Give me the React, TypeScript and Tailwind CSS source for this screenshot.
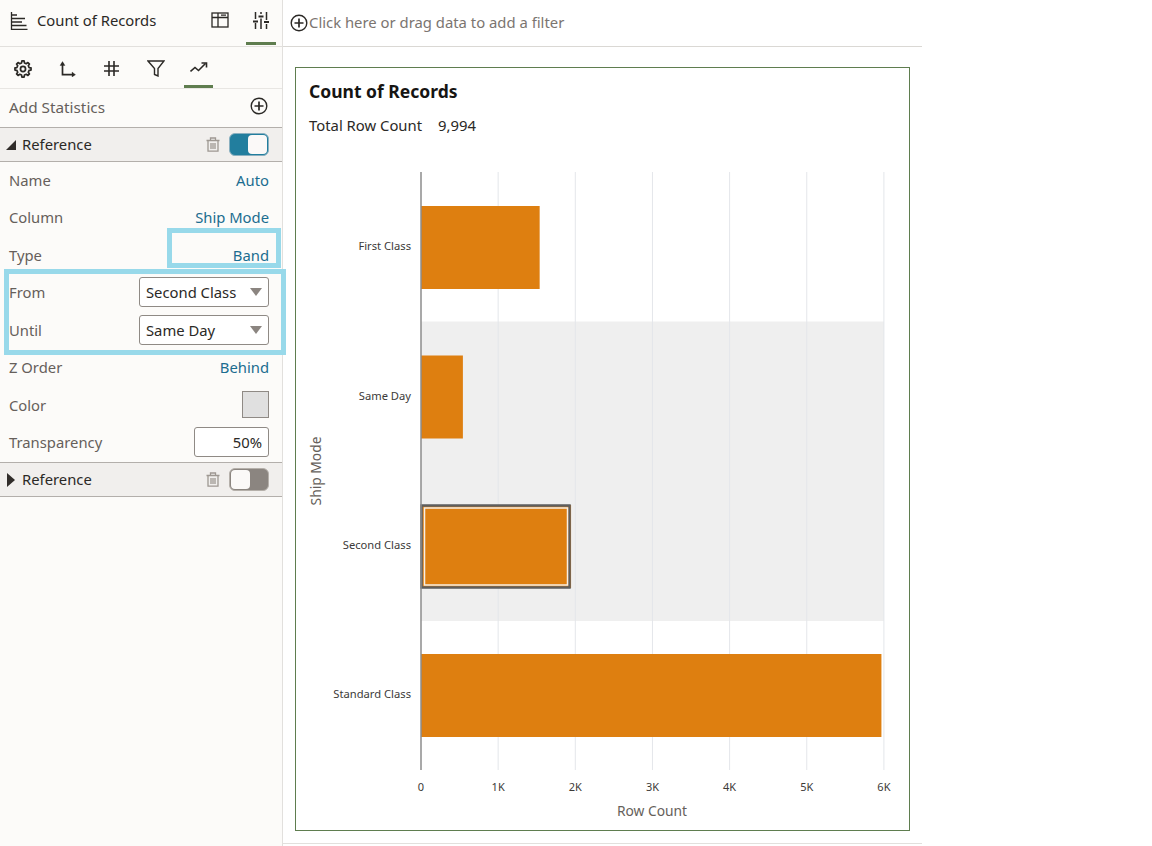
const F = { fontFamily: '"Noto Sans", "Open Sans", sans-serif' };

function ChartIcon() {
  return (
    <svg width="18" height="18" viewBox="0 0 18 18" fill="none" stroke="#2b2926" strokeWidth="1.300">
      <path d="M1.500 0v17.500H17.500M2 3h5M2 6.500h13M2 10h10M2 13.500h14.500" />
    </svg>
  );
}
function LayoutIcon() {
  return (
    <svg width="18" height="16" viewBox="0 0 18 16" fill="none" stroke="#2b2926" strokeWidth="1.300">
      <rect x="1" y="1" width="16" height="14" />
      <path d="M1 5.500h16M7 1v14M10 3.200h5" />
    </svg>
  );
}
function SlidersIcon() {
  return (
    <svg width="16" height="17" viewBox="0 0 16 17" fill="none" stroke="#2b2926" strokeWidth="1.500">
      <path d="M2.500 0v7M2.500 11v6M8 0v2M8 6.500v10.500M13.500 0v8M13.500 12v5" />
      <path d="M0 9.500h5M5.500 4.500h5M11 10h5" strokeWidth="2" />
    </svg>
  );
}
function GearIcon() {
  const n = 8;
  const pts: string[] = [];
  for (let i = 0; i < n; i++) {
    const a = (i * 2 * Math.PI) / n;
    const step = (2 * Math.PI) / n;
    const list: [number, number][] = [
      [8.3, a - step * 0.3],
      [10.8, a - step * 0.17],
      [10.8, a + step * 0.17],
      [8.3, a + step * 0.3],
    ];
    for (const [r, t] of list) {
      pts.push(`${(12 + r * Math.sin(t)).toFixed(2)},${(12 - r * Math.cos(t)).toFixed(2)}`);
    }
  }
  return (
    <svg width="18" height="18" viewBox="0 0 24 24" fill="none" stroke="#2b2926" strokeWidth="2.300" strokeLinejoin="round">
      <polygon points={pts.join(" ")} />
      <circle cx="12" cy="12" r="3.400" />
    </svg>
  );
}
function AxisIcon() {
  return (
    <svg width="18" height="16" viewBox="0 0 18 16" fill="none" stroke="#2b2926" strokeWidth="1.700">
      <path d="M4.500 2v11.700h10" />
      <path d="M2 4.500l2.500-4 2.500 4z" fill="#2b2926" strokeWidth="0.300" />
      <path d="M14 11l3.500 2.700-3.500 2.300z" fill="#2b2926" strokeWidth="0.300" />
    </svg>
  );
}
function HashIcon() {
  return (
    <svg width="15" height="15" viewBox="0 0 15 15" fill="none" stroke="#2b2926" strokeWidth="1.600">
      <path d="M5 0v15M10 0v15M0 5h15M0 10h15" />
    </svg>
  );
}
function FunnelIcon() {
  return (
    <svg width="18" height="17" viewBox="0 0 18 17" fill="none" stroke="#2b2926" strokeWidth="1.400">
      <path d="M1 1h16l-6 7.500V16l-3.500-1.500V8.500z" />
    </svg>
  );
}
function TrendIcon() {
  return (
    <svg width="18" height="11" viewBox="0 0 18 11" fill="none" stroke="#2b2926" strokeWidth="1.600">
      <path d="M0.500 9.500l4.500-4 3.500 3 7-7" />
      <path d="M11.500 1h5v4.500" />
    </svg>
  );
}
function PlusCircle({ size }: { size: number }) {
  return (
    <svg width={size} height={size} viewBox="0 0 18 18" fill="none" stroke="#2b2926" strokeWidth="1.400">
      <circle cx="9" cy="9" r="7.800" />
      <path d="M9 4.500v9M4.500 9h9" strokeWidth="1.700" />
    </svg>
  );
}
function TrashIcon() {
  return (
    <svg width="14" height="15" viewBox="0 0 14 15" fill="none" stroke="#9e9892" strokeWidth="1.300">
      <path d="M0.500 3.500h13M4.500 3.500V1h5v2.500M2 3.500V14.200h10V3.500M5 6v6M7 6v6M9 6v6" />
    </svg>
  );
}

function Toggle({ on }: { on: boolean }) {
  return on ? (
    <div className="flex h-[23px] w-10 items-center justify-end rounded-[6px] border border-[#8ab0c0] bg-[#227e9e] pr-[1px]">
      <div className="h-[19px] w-[19px] rounded-[4px] bg-[#fbf9f8]" />
    </div>
  ) : (
    <div className="flex h-[23px] w-10 items-center justify-start rounded-[6px] border border-[#b5b0aa] bg-[#8b8580] pl-[1px]">
      <div className="h-[19px] w-[19px] rounded-[4px] bg-[#fbf9f8]" />
    </div>
  );
}

function SectionHeader({ open, on }: { open: boolean; on: boolean }) {
  return (
    <div className="flex h-[35px] items-center border-y border-[#b3afab] bg-[#f1efed] pr-[13px]">
      <div className="flex w-[22px] items-center justify-center">
        {open ? (
          <div className="h-0 w-0 border-b-[10px] border-l-[10px] border-b-[#312d2a] border-l-transparent" />
        ) : (
          <div className="h-0 w-0 border-y-[7px] border-l-[8px] border-y-transparent border-l-[#312d2a]" />
        )}
      </div>
      <span className="text-[14.800px] text-[#2b2926]">Reference</span>
      <div className="ml-auto mr-[9px] flex"><TrashIcon /></div>
      <Toggle on={on} />
    </div>
  );
}

function Row({ label, children }: { label: string; children: React.ReactNode }) {
  return (
    <div className="flex h-[37.500px] items-center justify-between pb-[2px] pl-[9px] pr-[13px]">
      <span className="text-[14.800px] text-[#665f5b]">{label}</span>
      {children}
    </div>
  );
}

function LinkValue({ children }: { children: React.ReactNode }) {
  return <span className="text-[14.800px] text-[#1b6d90]">{children}</span>;
}

function Select({ value }: { value: string }) {
  return (
    <div className="flex h-[30px] w-[130px] items-center justify-between rounded-[3px] border border-[#8f8a85] bg-white pl-[6px] pr-[6px]">
      <span className="text-[14.800px] text-[#2b2926]">{value}</span>
      <div className="h-0 w-0 border-x-[6px] border-t-[8px] border-x-transparent border-t-[#8b8580]" />
    </div>
  );
}

function Chart() {
  const x0 = 125;
  const unit = 77.150;
  const top = 105;
  const bottom = 703;
  const ticks = ["0", "1K", "2K", "3K", "4K", "5K", "6K"];
  const bars = [
    { name: "First Class", y: 139, v: 1538 },
    { name: "Same Day", y: 288.500, v: 543 },
    { name: "Second Class", y: 438, v: 1945 },
    { name: "Standard Class", y: 587, v: 5968 },
  ];
  return (
    <svg width="613" height="762" className="block" style={F}>
      <rect x={x0} y={254.500} width={463} height={299.500} fill="#efefef" />
      {ticks.slice(1).map((_, i) => (
        <line key={i} x1={x0 + unit * (i + 1)} x2={x0 + unit * (i + 1)} y1={top} y2={bottom} stroke="#e4e6ea" strokeWidth="1" />
      ))}
      {bars.map((b) => (
        <g key={b.name}>
          <rect x={x0} y={b.y} width={(b.v / 1000) * unit} height={83} fill="#de7f10" />
          <text x={115} y={b.y + 44} textAnchor="end" fontSize="11.200" fill="#3c3a38">
            {b.name}
          </text>
        </g>
      ))}
      <rect x={125.500} y={438.500} width={148} height={82} fill="none" stroke="#5e5e5e" strokeWidth="2.500" />
      <rect x={128.500} y={441} width={143} height={77} fill="none" stroke="#f6efe6" strokeWidth="1.500" />
      <line x1={x0} x2={x0} y1={top} y2={bottom} stroke="#8c8c8c" strokeWidth="1.500" />
      {ticks.map((t, i) => (
        <text key={t} x={x0 + unit * i} y={724} textAnchor="middle" fontSize="11" fill="#3c3a38">
          {t}
        </text>
      ))}
      <text x={356} y={749} textAnchor="middle" fontSize="13.800" fill="#665f5b">
        Row Count
      </text>
      <text x={0} y={0} textAnchor="middle" fontSize="13.800" fill="#665f5b" transform="translate(25 404) rotate(-90)">
        Ship Mode
      </text>
    </svg>
  );
}

export default function App() {
  return (
    <div className="relative flex h-[846px] w-[1152px] overflow-hidden bg-white" style={F}>
      <aside className="flex h-full w-[283px] shrink-0 flex-col border-r border-[#e2e0dd] bg-[#fcfbf9]">
        <div className="flex h-[47px] border-b border-[#e2e0dd] pb-[1px] pl-[10px]">
          <div className="flex h-full items-center pb-[3px]">
            <ChartIcon />
            <span className="mb-[2px] ml-[9px] text-[14.800px] text-[#2b2926]">Count of Records</span>
          </div>
          <div className="ml-auto flex h-full items-center">
            <div className="mr-[17px] flex h-full items-center pb-[5px]"><LayoutIcon /></div>
            <div className="mr-[6px] flex h-full w-[30px] items-center justify-center border-b-[3px] border-[#5f7d4f] pb-[2px]"><SlidersIcon /></div>
          </div>
        </div>
        <div className="flex h-[42px] items-end border-b border-[#e8e6e3] pl-[14px]">
          <div className="flex h-full w-[44px] items-center pt-[3px]"><GearIcon /></div>
          <div className="flex h-full w-[44px] items-center pt-[2px]"><AxisIcon /></div>
          <div className="flex h-full w-[42px] items-center pl-[2px] pt-[2px]"><HashIcon /></div>
          <div className="flex h-full w-[40px] items-center pl-[3px] pt-[2px]"><FunnelIcon /></div>
          <div className="flex h-full w-[29px] items-center justify-center border-b-[3px] border-[#5f7d4f] pt-[3px]"><TrendIcon /></div>
        </div>
        <div className="flex h-[38px] items-center justify-between pb-[2px] pl-[9px] pr-[14px]">
          <span className="text-[15.300px] text-[#665f5b]">Add Statistics</span>
          <div className="mb-[2px] flex"><PlusCircle size={18} /></div>
        </div>
        <SectionHeader open on />
        <div>
          <Row label="Name"><LinkValue>Auto</LinkValue></Row>
          <Row label="Column"><LinkValue>Ship Mode</LinkValue></Row>
          <Row label="Type"><LinkValue>Band</LinkValue></Row>
          <Row label="From"><Select value="Second Class" /></Row>
          <Row label="Until"><Select value="Same Day" /></Row>
          <Row label="Z Order"><LinkValue>Behind</LinkValue></Row>
          <Row label="Color">
            <div className="h-[27px] w-[27px] border border-[#8f8a85] bg-[#e0e0e0]" />
          </Row>
          <Row label="Transparency">
            <div className="flex h-[30px] w-[75px] items-center justify-end rounded-[3px] border border-[#8f8a85] bg-white pr-[6px] text-[14.800px] text-[#2b2926]">50%</div>
          </Row>
        </div>
        <SectionHeader open={false} on={false} />
      </aside>

      <main className="flex h-[844px] w-[639px] shrink-0 flex-col border-b border-[#e2e0dd]">
        <div className="flex h-[47px] shrink-0 items-center border-b border-[#dad8d4] pb-[1px] pl-[7px]">
          <PlusCircle size={18} />
          <span className="mb-[1px] ml-[1px] text-[14.850px] text-[#7b7570]">Click here or drag data to add a filter</span>
        </div>
        <div className="pl-[12px] pt-[20px]">
          <div className="h-[764px] w-[615px] border border-[#5f7d4f] bg-white">
            <div className="pl-[13px] pt-[10px] text-[17.500px] font-bold leading-[26px] text-[#161513]">Count of Records</div>
            <div className="flex pl-[13px] pt-[11px] text-[14.850px] leading-5 text-[#2b2926]">
              <span className="w-[129px]">Total Row Count</span>
              <span>9,994</span>
            </div>
            <div className="-mt-[68px]"><Chart /></div>
          </div>
        </div>
      </main>

      <div className="absolute left-[167px] top-[228px] h-[40px] w-[114px] border-[5px] border-[#98d9ea]" />
      <div className="absolute left-[4px] top-[269px] h-[86px] w-[282px] border-[5px] border-[#98d9ea]" />
    </div>
  );
}
